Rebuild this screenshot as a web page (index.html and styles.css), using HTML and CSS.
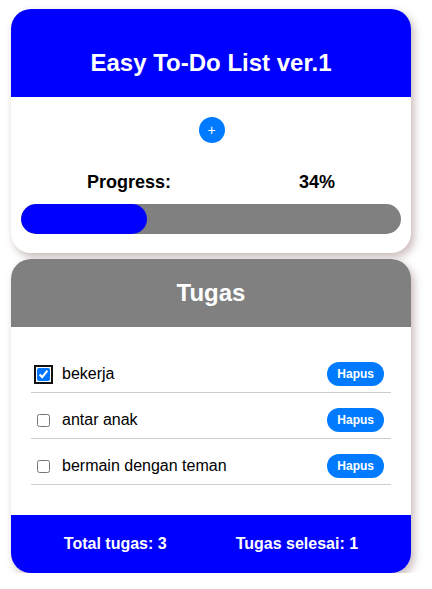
FILE: index.html
```html
<!DOCTYPE html>
<html>
<head>
<meta charset="utf-8">
<link rel="stylesheet" href="styles.css">
</head>
<body>
<div class="app">
  <section class="card top-card">
    <header class="top-header"><h1>Easy To-Do List ver.1</h1></header>
    <div class="top-body">
      <button class="add-btn">+</button>
      <div class="progress-row">
        <span>Progress:</span>
        <span>34%</span>
      </div>
      <div class="bar"><div class="bar-fill" style="width:33.2%"></div></div>
    </div>
  </section>
  <section class="card task-card">
    <header class="task-header"><h2>Tugas</h2></header>
    <ul class="task-list">
      <li class="task"><input type="checkbox" class="check focused" checked><span class="task-text">bekerja</span><button class="del-btn">Hapus</button></li>
      <li class="task"><input type="checkbox" class="check"><span class="task-text">antar anak</span><button class="del-btn">Hapus</button></li>
      <li class="task"><input type="checkbox" class="check"><span class="task-text">bermain dengan teman</span><button class="del-btn">Hapus</button></li>
    </ul>
    <footer class="task-footer">
      <span>Total tugas: 3</span>
      <span>Tugas selesai: 1</span>
    </footer>
  </section>
</div>
</body>
</html>
```

FILE: styles.css
```css
* { box-sizing: border-box; }
html, body { margin: 0; padding: 0; background: #fff; }
body { font-family: "Liberation Sans", Arial, sans-serif; color: #000; }

.app {
  width: 400px;
  margin: 9px 0 0 11px;
  display: flex;
  flex-direction: column;
  gap: 6px;
}

.card {
  background: #fff;
  border-radius: 20px;
  overflow: hidden;
  box-shadow: 3px 4px 8px rgba(120, 80, 80, 0.4);
}

.top-header {
  background: #0000ff;
  padding: 40px 0 20px;
  text-align: center;
}
.top-header h1,
.task-header h2 {
  margin: 0;
  color: #fff;
  font-size: 24px;
  line-height: 28px;
  font-weight: bold;
}

.top-body {
  padding: 20px 10px 19px;
  display: flex;
  flex-direction: column;
  align-items: center;
}

.add-btn {
  width: 26px;
  height: 26px;
  border: none;
  border-radius: 50%;
  background: #007bff;
  color: #fff;
  font-family: "Liberation Sans", Arial, sans-serif;
  font-size: 14px;
  line-height: 26px;
  padding: 0;
  margin-left: 1px;
}

.progress-row {
  margin-top: 29px;
  display: flex;
  justify-content: center;
  gap: 128px;
  font-size: 18px;
  font-weight: bold;
  line-height: 21px;
  width: 100%;
}

.bar {
  margin-top: 11px;
  width: 100%;
  height: 30px;
  border-radius: 15px;
  background: #808080;
  overflow: hidden;
}
.bar-fill {
  height: 100%;
  background: #0000ff;
  border-radius: 15px;
}

.task-header {
  background: #808080;
  padding: 20px 0 20px;
  text-align: center;
}

.task-list {
  list-style: none;
  margin: 0;
  padding: 20px 20px 30px;
}
.task {
  display: flex;
  align-items: center;
  padding: 15px 0 6px;
  border-bottom: 1px solid #cccccc;
}
.check {
  width: 13px;
  height: 13px;
  margin: 0 0 0 6px;
  accent-color: #0075ff;
}
.check.focused {
  outline: 2px solid #111;
  outline-offset: 1px;
  border-radius: 2px;
}
.task-text {
  flex: 1;
  margin-left: 12px;
  font-size: 16px;
  line-height: 18px;
}
.del-btn {
  margin-right: 7px;
  height: 24px;
  padding: 0 10px;
  border: none;
  border-radius: 12px;
  background: #007bff;
  color: #fff;
  font-family: "Liberation Sans", Arial, sans-serif;
  font-size: 12px;
  font-weight: bold;
}

.task-footer {
  background: #0000ff;
  color: #fff;
  display: flex;
  justify-content: center;
  gap: 69px;
  padding: 20px 0 20px;
  font-size: 16px;
  line-height: 18px;
  font-weight: bold;
}
```
